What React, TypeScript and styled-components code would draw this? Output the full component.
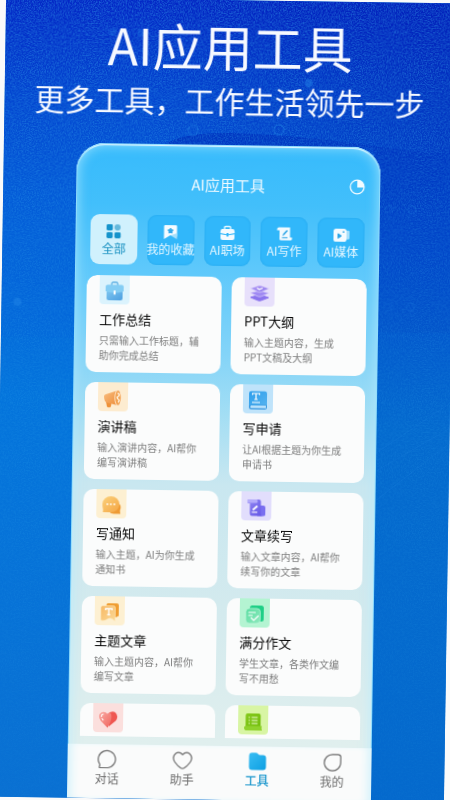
import React from "react";
import styled, { createGlobalStyle } from "styled-components";

const GlobalStyle = createGlobalStyle`
  *, *::before, *::after { box-sizing: border-box; }
  body {
    margin: 0;
    background: #fafafa;
    font-family: "Noto Sans CJK SC", "Noto Sans", sans-serif;
  }
  button { font: inherit; border: 0; padding: 0; background: none; cursor: pointer; }
  h1, h2, h3, p { margin: 0; font-weight: 400; }
`;

const Page = styled.div`
  height: 100vh;
  overflow: hidden;
`;

const Poster = styled.div`
  position: relative;
  isolation: isolate;
  display: flex;
  flex-direction: column;
  height: 100%;
  overflow: hidden;
  transform: rotate(0.87deg);
  background: #0a6fd2;
`;

const Backdrop = styled.svg`
  position: absolute;
  inset: 0;
  z-index: -1;
  width: 100%;
  height: 100%;
`;

const Hero = styled.header`
  padding-top: 15px;
  text-align: center;
  color: #f6f9ff;
  white-space: nowrap;
`;

const HeroTitle = styled.h1`
  font-size: 50px;
  line-height: 60px;
`;

const HeroText = styled.p`
  margin-top: 5px;
  font-size: 30px;
  line-height: 40px;
`;

const Phone = styled.main`
  display: flex;
  flex: 1;
  flex-direction: column;
  min-height: 0;
  margin: 25px 73px 0;
  overflow: hidden;
  border-radius: 28px 28px 0 0;
  background: linear-gradient(
    #37bbfc 0,
    #42bffb 60px,
    #60c9fb 130px,
    #84d4f8 210px,
    #a3def4 270px,
    #c9e7f0 340px,
    #d3eaee 460px,
    #e0efee 600px
  );
  box-shadow:
    inset 0 0 0 1px #8fdcfc,
    inset 0 2px 1px #e2f8ff,
    inset 0 0 12px 2px rgba(180, 235, 255, 0.7);
`;

const Bar = styled.div`
  display: grid;
  grid-template-columns: 36px 1fr 36px;
  align-items: center;
  margin-top: 20px;
  height: 40px;
  color: #f2fbff;
`;

const BarTitle = styled.h2`
  grid-column: 2;
  text-align: center;
  font-size: 15px;
  line-height: 20px;
`;

const BarButton = styled.button`
  display: flex;
  width: 16px;
  height: 16px;
  margin-left: 5px;
  color: inherit;
`;

const Chips = styled.nav`
  display: grid;
  grid-template-columns: repeat(5, 1fr);
  gap: 10px;
  margin: 11px 15px 0;
`;

const Chip = styled.button<{ $active?: boolean }>`
  display: flex;
  flex-direction: column;
  align-items: center;
  min-width: 0;
  height: 50px;
  padding-top: 9px;
  border-radius: 9px;
  background: ${(p) => (p.$active ? "#d0f1fd" : "#31b7fa")};
  box-shadow: ${(p) => (p.$active ? "none" : "inset 0 0 2px rgba(20, 150, 225, 0.6)")};
  color: ${(p) => (p.$active ? "#168fc0" : "#e9f8ff")};
  font-size: 12px;
  line-height: 18px;
  white-space: nowrap;
  svg { flex: none; }
`;

const List = styled.section`
  display: grid;
  flex: 1;
  grid-template-columns: 1fr 1fr;
  grid-auto-rows: 97px;
  gap: 10px;
  min-height: 0;
  margin: 11px 12px 8px;
  overflow: hidden;
  border-radius: 10px 10px 0 0;
`;

const Card = styled.article`
  overflow: hidden;
  padding: 0 16px 0 13px;
  border-radius: 10px;
  background: #fbfcfc;
`;

const Tile = styled.div<{ $tint: string }>`
  display: flex;
  justify-content: center;
  width: 30px;
  height: 29px;
  padding-top: 6px;
  border-radius: 0 0 4px 4px;
  background: ${(p) => p.$tint};
`;

const CardTitle = styled.h3`
  margin-top: 5px;
  color: #060606;
  font-size: 13px;
  line-height: 20px;
`;

const CardText = styled.p`
  margin-top: 3px;
  color: #7d7d7d;
  font-size: 10px;
  line-height: 15px;
`;

const Tabs = styled.nav`
  display: grid;
  grid-template-columns: repeat(4, 1fr);
  height: 54px;
  padding: 0 2px;
  background: #fafbfb;
  box-shadow: inset 9px 0 9px -5px #d6f3fb, inset -9px 0 9px -5px #d6f3fb;
`;

const Tab = styled.button<{ $active?: boolean }>`
  display: flex;
  flex-direction: column;
  align-items: center;
  padding-top: 5px;
  color: ${(p) => (p.$active ? "#1795cc" : "#6b6b6b")};
  font-size: 12px;
  font-weight: ${(p) => (p.$active ? 500 : 400)};
  line-height: 18px;
`;

const ChipIcon = ({ children }: { children: React.ReactNode }) => (
  <svg width="16" height="16" viewBox="0 0 16 16" aria-hidden="true">{children}</svg>
);

const chips = [
  {
    label: "全部",
    icon: (
      <ChipIcon>
        <rect x="1" y="1" width="6.2" height="6.2" rx="1.4" fill="#1593cb" />
        <circle cx="12" cy="4.1" r="3.1" fill="#64b9dc" />
        <rect x="1" y="9" width="6.2" height="6" rx="1.4" fill="#1593cb" />
        <rect x="9" y="9" width="6.2" height="6" rx="1.4" fill="#1593cb" />
      </ChipIcon>
    ),
  },
  {
    label: "我的收藏",
    icon: (
      <ChipIcon>
        <path d="M1.5 2.2Q1.5 1 2.7 1H13.3Q14.5 1 14.5 2.2V12.5L8 11L1.5 15Z" fill="#f4fbff" />
        <path d="M8 11.2L14.5 9V15Z" fill="#a5dffb" />
        <path d="M8 4l.9 1.500 1.700.4-1.100 1.300.1 1.700L8 8.300l-1.600.6.1-1.700-1.100-1.300 1.700-.4Z" fill="#31a9ea" stroke="#31a9ea" strokeLinejoin="round" />
      </ChipIcon>
    ),
  },
  {
    label: "AI职场",
    icon: (
      <ChipIcon>
        <path d="M5 4V2.600Q5 1.500 6.100 1.500H9.900Q11 1.500 11 2.600V4" fill="none" stroke="#e3f6ff" strokeWidth="1.400" />
        <path d="M2.500 4H13.500Q15 4 15.200 8L9 9.200V8H7V9.200L.8 8Q1 4 2.500 4Z" fill="#f4fbff" />
        <path d="M1 9.300L7 10.300V11.500H9V10.300L15 9.300V13Q15 15 13 15H3Q1 15 1 13Z" fill="#f4fbff" />
      </ChipIcon>
    ),
  },
  {
    label: "AI写作",
    icon: (
      <ChipIcon>
        <path d="M.5 3.500Q.5 1.500 2.500 1.500H13.500V11.500H15.500V13Q15.500 14.500 14 14.500H4.500Q3 14.500 3 13V4.500H.5Z" fill="#f1faff" />
        <path d="M6 10.200L6.800 7.800L10.200 4L11.300 5L7.800 9Z" fill="#2aa4e6" />
        <path d="M5.500 11.800H11" stroke="#2aa4e6" strokeWidth="1" />
      </ChipIcon>
    ),
  },
  {
    label: "AI媒体",
    icon: (
      <ChipIcon>
        <path d="M11 4.500Q16 3 16 5V11.500Q16 13.500 11 12Z" fill="#a8e0fb" />
        <rect x="0" y="2" width="13" height="13" rx="2.600" fill="#f4fbff" />
        <path d="M4.500 7V11.500L8 9.200Z" fill="#2aa4e6" stroke="#2aa4e6" strokeLinejoin="round" />
        <circle cx="10" cy="5.200" r=".9" fill="#2aa4e6" />
      </ChipIcon>
    ),
  },
];

const CardIcon = ({ id, from, to, children }: { id: string; from: string; to: string; children: React.ReactNode }) => (
  <svg width="20" height="20" viewBox="0 0 20 20" aria-hidden="true">
    <defs>
      <linearGradient id={id} x1="0" y1="0" x2="1" y2="1">
        <stop offset="0" stopColor={from} />
        <stop offset="1" stopColor={to} />
      </linearGradient>
    </defs>
    {children}
  </svg>
);

const cards = [
  {
    title: "工作总结", text: "只需输入工作标题，辅助你完成总结", tint: "#dbf3fd",
    icon: (
      <CardIcon id="case" from="#7fc6f0" to="#4d9fe0">
        <path d="M7 4V2.500Q7 1 8.500 1H11.500Q13 1 13 2.500V4" fill="none" stroke="#5fb0e4" strokeWidth="1.300" />
        <rect x="2" y="9" width="16" height="10" rx="2" fill="url(#case)" />
        <path d="M1 5.500Q1 3.500 3 3.500H17Q19 3.500 19 5.500V10Q10 13 1 10Z" fill="#84cdf4" />
        <rect x="9" y="9" width="2" height="4.500" rx="1" fill="#fff" />
      </CardIcon>
    ),
  },
  {
    title: "PPT大纲", text: "输入主题内容，生成PPT文稿及大纲", tint: "#e7e0fb",
    icon: (
      <CardIcon id="layers" from="#b49cf5" to="#8d78ec">
        <path d="M1 14L10 11L19 14L11.500 17Q10 17.500 8.500 17Z" fill="#8b74ee" stroke="#8b74ee" strokeLinejoin="round" />
        <path d="M.5 9.500L10 7L19.500 9.500L11.500 13Q10 13.500 8.500 13Z" fill="#a08af3" stroke="#e7e0fb" strokeWidth=".6" />
        <path d="M.5 5L8.500 2.200Q10 1.700 11.500 2.200L19.500 5L11.500 8.500Q10 9 8.500 8.500Z" fill="url(#layers)" stroke="#e7e0fb" strokeWidth=".6" />
        <path d="M7.300 4.500L9.500 6L13 4.500" fill="none" stroke="#fff" strokeWidth="1.200" />
      </CardIcon>
    ),
  },
  {
    title: "演讲稿", text: "输入演讲内容，AI帮你编写演讲稿", tint: "#fdecd0",
    icon: (
      <CardIcon id="horn" from="#f9be80" to="#ed8c38">
        <path d="M3 13L8.500 14.500L8 18.500Q6 20 4 18.500Z" fill="#ee9138" />
        <path d="M1 8Q1 6.500 3 6L15 2V17L4 14.500Q1 13.500 1 8Z" fill="url(#horn)" />
        <ellipse cx="15" cy="9.500" rx="3.200" ry="7.800" fill="#f2a252" stroke="#fff0db" strokeWidth=".8" />
        <path d="M14.500 5Q17.500 5.500 15.500 8Q13 8.800 14.800 10.500Q17.500 12 15 14" fill="none" stroke="#fff5e5" strokeWidth="1.300" />
      </CardIcon>
    ),
  },
  {
    title: "写申请", text: "让AI根据主题为你生成申请书", tint: "#bfe3fa",
    icon: (
      <CardIcon id="book" from="#2c9eec" to="#57b4ef">
        <rect x="1" y="10" width="18" height="9" rx="2.500" fill="#3495df" />
        <path d="M3 15H18V17.800H3Q1.500 17 3 15Z" fill="#b8e1fb" />
        <path d="M1 3Q1 .8 3.200 .8H16.800Q19 .8 19 3V14.500H3Q1 14.500 1 16.500Z" fill="url(#book)" />
        <path d="M4.500 4.500V3H11.500V4.500M8 3V9M6.300 9H9.700M4 12H12" fill="none" stroke="#fff" strokeWidth="1.200" />
      </CardIcon>
    ),
  },
  {
    title: "写通知", text: "输入主题，AI为你生成通知书", tint: "#fdf0d2",
    icon: (
      <CardIcon id="talk" from="#fbd17b" to="#f4a645">
        <path d="M17 7.500Q20.500 10.500 18.800 14.500Q18.500 16 19.200 18.500H12.500Q9.500 18.500 8 16.500Z" fill="#ee9a33" />
        <path d="M1 9A8.500 8 0 1 1 9.500 17H1.500Q2 15 1.500 13Q1 11 1 9Z" fill="url(#talk)" />
        <circle cx="6" cy="9" r=".9" fill="#fff" />
        <circle cx="9.500" cy="9" r=".9" fill="#fff" />
        <circle cx="13" cy="9" r=".9" fill="#fff" />
      </CardIcon>
    ),
  },
  {
    title: "文章续写", text: "输入文章内容，AI帮你续写你的文章", tint: "#e2defc",
    icon: (
      <CardIcon id="scroll" from="#9187f3" to="#6254e5">
        <path d="M11 8H17Q19 8 19 10V17Q19 18.500 17 18.500H11Z" fill="#7a6ff0" />
        <path d="M2.500 2H12.500Q14.500 2 14.500 4V16Q14.500 18.500 17 18.500H5.500Q3.500 18.500 3.500 16V6H1.500Q.5 2 2.500 2Z" fill="url(#scroll)" />
        <path d="M1.500 2H10.500Q12 4 10.500 5.500H1.500Q.2 3.800 1.500 2Z" fill="#b3abfa" />
        <path d="M6.500 12.500L11 8.500" stroke="#fff" strokeWidth="1.800" />
        <path d="M5.500 14.800H11" stroke="#fff" strokeWidth="1.100" />
      </CardIcon>
    ),
  },
  {
    title: "主题文章", text: "输入主题内容，AI帮你编写文章", tint: "#fdf0d2",
    icon: (
      <CardIcon id="flag" from="#f7b966" to="#fbd894">
        <path d="M6.500 3Q6.500 1 8.500 1H17Q19 1 19 3V13.500L16 15H6.500Z" fill="#ef9d31" />
        <path d="M1 5.500Q1 3.500 3 3.500H13.500Q15.500 3.500 15.500 5.500V19Q11 14.500 8.500 16.500Q5 19.500 1 18Z" fill="url(#flag)" stroke="#fff0cf" strokeWidth=".5" />
        <path d="M5.800 8V6.500H12.200V8M9 6.500V12.500M7.500 12.500H10.500" fill="none" stroke="#fff" strokeWidth="1.300" />
      </CardIcon>
    ),
  },
  {
    title: "满分作文", text: "学生文章，各类作文编写不用愁", tint: "#b4f4d2",
    icon: (
      <CardIcon id="paper" from="#58dda0" to="#8fe9be">
        <rect x="5" y="1" width="14" height="16" rx="2.500" fill="#1fcf86" />
        <rect x="1" y="4" width="14.500" height="15" rx="3.500" fill="url(#paper)" stroke="#c5f8df" strokeWidth=".7" />
        <path d="M4 8H10.500M4 11H7.500M6.500 13.500L9 16L13.500 11.500" fill="none" stroke="#fff" strokeWidth="1.200" strokeLinecap="round" />
      </CardIcon>
    ),
  },
  {
    title: "", text: "", tint: "#fbdfdd",
    icon: (
      <CardIcon id="heart" from="#f9aaa3" to="#f0635c">
        <path d="M9 5Q13 1 17 3Q21 7 17.500 11.500L11 17Z" fill="#ef5650" />
        <path d="M9.500 18.500L2.500 11.500Q-.5 7 2 4.200Q6 1 9.500 5Q12 2.500 13 5Q14.500 11 9.500 18.500Z" fill="url(#heart)" />
        <path d="M3.200 7.500Q3 5.500 5 5M4 9.500L5 10.800" fill="none" stroke="#fff" strokeWidth="1.100" strokeLinecap="round" />
      </CardIcon>
    ),
  },
  {
    title: "", text: "", tint: "#d8f5a4",
    icon: (
      <CardIcon id="notes" from="#84c91b" to="#72bd0c">
        <path d="M2.500 4Q2.500 2 4.500 2H15.500Q17.500 2 17.500 4V15.500H2.500Z" fill="url(#notes)" />
        <path d="M1 16Q1 14.500 3 14.500H19Q18 16 19 19H3Q1 19 1 16Z" fill="#8fd22c" />
        <path d="M8.500 6H14.500M8.500 9H14.500M8.500 12H14.500M5.500 6H6.800M5.500 9H6.800M5.500 12H6.800" stroke="#f2ffd8" strokeWidth="1.200" />
      </CardIcon>
    ),
  },
];

const TabIcon = ({ children }: { children: React.ReactNode }) => (
  <svg width="20" height="20" viewBox="0 0 20 20" fill="none" stroke="currentColor" strokeWidth="1.2" strokeLinejoin="round" aria-hidden="true">
    {children}
  </svg>
);

const tabs = [
  { label: "对话", icon: <TabIcon><path d="M2 18.500V17Q2.800 16 2 14.500A8.600 8.600 0 1 1 10.500 18.500Z" /></TabIcon> },
  { label: "助手", icon: <TabIcon><path d="M10 4.200Q13.500 .8 17 3.300Q21 7 17.500 12Q15 15.500 11.500 17.800Q10 18.600 8.500 17.800Q5 15.500 2.500 12Q-1 7 3 3.300Q6.500 .8 10 4.200Z" /></TabIcon> },
  {
    label: "工具",
    icon: (
      <TabIcon>
        <defs>
          <linearGradient id="folder" x1="0" y1="0" x2="1" y2="1">
            <stop offset="0" stopColor="#39bdf3" />
            <stop offset="1" stopColor="#0d9fe2" />
          </linearGradient>
        </defs>
        <path d="M1.500 4.500Q1.500 1.200 4.500 1.200H8Q9.500 1.200 10.500 2.500Q11.300 3.500 12.500 3.500H15.500Q18.500 3.500 18.500 6.500V15.500Q18.500 18.500 15.500 18.500H4.500Q1.500 18.500 1.500 15.500Z" fill="url(#folder)" stroke="none" />
      </TabIcon>
    ),
  },
  { label: "我的", icon: <TabIcon><path d="M10 1.800H15.500Q18.200 1.800 18.200 4.500V10A8.200 8.200 0 1 1 10 1.800Z" /></TabIcon> },
];

const PosterBackdrop = () => (
  <Backdrop viewBox="0 0 450 800" preserveAspectRatio="none" aria-hidden="true">
    <defs>
      <linearGradient id="sky" x1="0" y1="0" x2="0" y2="1">
        <stop offset="0" stopColor="#0428c6" />
        <stop offset=".12" stopColor="#0446d0" />
        <stop offset=".25" stopColor="#045cd8" />
        <stop offset=".5" stopColor="#0474dc" />
        <stop offset="1" stopColor="#0a70d2" />
      </linearGradient>
      <linearGradient id="shade" x1="0" y1="0" x2="1" y2="0">
        <stop offset=".3" stopColor="#0010a0" stopOpacity="0" />
        <stop offset="1" stopColor="#0010a0" stopOpacity=".32" />
      </linearGradient>
      <linearGradient id="hill" x1="0" y1="130" x2="0" y2="430" gradientUnits="userSpaceOnUse">
        <stop offset="0" stopColor="#0034c0" />
        <stop offset=".4" stopColor="#0248ca" />
        <stop offset="1" stopColor="#0468cc" />
      </linearGradient>
      <linearGradient id="fade" x1="0" y1="0" x2="0" y2="1">
        <stop offset="0" stopColor="#fff" />
        <stop offset=".35" stopColor="#777" />
        <stop offset="1" stopColor="#222" />
      </linearGradient>
      <mask id="grainMask"><rect width="450" height="800" fill="url(#fade)" /></mask>
      <filter id="grain" x="0" y="0" width="100%" height="100%">
        <feTurbulence type="fractalNoise" baseFrequency=".75" numOctaves="2" seed="4" />
        <feColorMatrix values="0 0 0 0 .05  0 0 0 0 .5  0 0 0 0 .9  0 3 0 0 -1.150" />
      </filter>
    </defs>
    <rect width="450" height="800" fill="url(#sky)" />
    <rect width="450" height="330" fill="url(#shade)" />
    <path d="M0 242Q50 238 90 212V340H0Z" fill="#0664dc" opacity=".2" />
    <path d="M160 146Q180 132 230 133Q300 134 370 144Q420 150 450 150V800H370V146Z" fill="url(#hill)" opacity=".85" />
    <g mask="url(#grainMask)">
      <rect width="450" height="800" filter="url(#grain)" opacity=".34" />
    </g>
    <g fill="#2286e8" opacity=".45">
      <circle cx="304" cy="82" r="4" />
      <circle cx="16" cy="305" r="4" />
      <circle cx="107" cy="34" r="4" opacity=".5" />
      <circle cx="136" cy="34" r="4" opacity=".6" />
    </g>
    <g fill="none" stroke="#2286e8" opacity=".55">
      <circle cx="189" cy="131" r="5" />
      <circle cx="275" cy="129" r="5" />
      <circle cx="386" cy="207" r="4" opacity=".3" />
      <circle cx="409" cy="207" r="4" opacity=".5" />
      <circle cx="386" cy="305" r="4" opacity=".3" />
      <circle cx="409" cy="304" r="4" opacity=".4" />
    </g>
    <path d="M375 452L450 400M375 470L450 425M375 500L450 440" stroke="#2a8be6" opacity=".15" />
  </Backdrop>
);

export default function App() {
  return (
    <Page>
      <GlobalStyle />
      <Poster>
        <PosterBackdrop />
        <Hero>
          <HeroTitle>AI应用工具</HeroTitle>
          <HeroText>更多工具，工作生活领先一步</HeroText>
        </Hero>
        <Phone>
          <Bar>
            <BarTitle>AI应用工具</BarTitle>
            <BarButton aria-label="历史记录">
              <svg width="16" height="16" viewBox="0 0 16 16" aria-hidden="true">
                <circle cx="8" cy="8" r="6.900" fill="none" stroke="currentColor" strokeWidth="1.300" />
                <path d="M8 1V8.500H15A7 7 0 0 0 8 1Z" fill="currentColor" />
              </svg>
            </BarButton>
          </Bar>
          <Chips>
            {chips.map((c, i) => (
              <Chip key={c.label} $active={i === 0}>{c.icon}{c.label}</Chip>
            ))}
          </Chips>
          <List>
            {cards.map((c, i) => (
              <Card key={i}>
                <Tile $tint={c.tint}>{c.icon}</Tile>
                {c.title && <CardTitle>{c.title}</CardTitle>}
                {c.text && <CardText>{c.text}</CardText>}
              </Card>
            ))}
          </List>
          <Tabs>
            {tabs.map((t) => (
              <Tab key={t.label} $active={t.label === "工具"}>{t.icon}{t.label}</Tab>
            ))}
          </Tabs>
        </Phone>
      </Poster>
    </Page>
  );
}
